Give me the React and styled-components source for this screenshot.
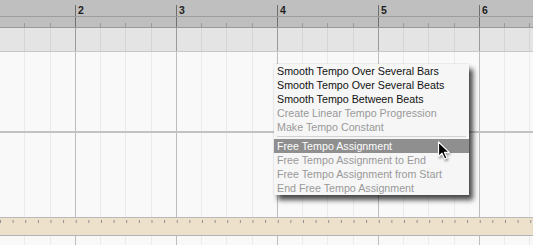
import React from "react";
import styled, { createGlobalStyle } from "styled-components";

const GlobalStyle = createGlobalStyle`
  html, body {
    margin: 0;
    padding: 0;
    background: #fafafa;
  }
`;

const BAR = 101;

const gridLines = (bar, beat) => `
  background-image:
    linear-gradient(to right, ${bar} 1px, transparent 1px),
    linear-gradient(to right, ${beat} 1px, transparent 1px),
    linear-gradient(to right, ${beat} 1px, transparent 1px),
    linear-gradient(to right, ${beat} 1px, transparent 1px);
  background-size: ${BAR}px 100%;
  background-position: 75px 0, 100px 0, 24px 0, 50px 0;
`;

const Arrangement = styled.div`
  position: relative;
  width: 533px;
  height: 245px;
  overflow: hidden;
  display: flex;
  flex-direction: column;
  background: #fafafa;
  font-family: "Liberation Sans", Arial, sans-serif;
`;

const Ruler = styled.div`
  flex: 0 0 16px;
  display: flex;
  align-items: flex-end;
  padding-left: 75px;
  background: #bfbfbf;
  border-bottom: 1px solid #9d9d9d;
`;

const BarLabel = styled.div`
  flex: ${(p) => (p.$last ? "1 1 auto" : `0 0 ${BAR}px`)};
  height: 11px;
  box-sizing: border-box;
  border-left: 1px solid #6e6e6e;
  padding-left: 2px;
  font-size: 10.5px;
  font-weight: bold;
  line-height: 10px;
  color: #1e1e1e;
`;

const TickRow = styled.div`
  flex: 0 0 10px;
  background-color: #bfbfbf;
  border-bottom: 1px solid #999;
  background-image:
    linear-gradient(to right, #707070 1px, transparent 1px),
    linear-gradient(to right, #9a9a9a 1px, transparent 1px),
    linear-gradient(to right, #9a9a9a 1px, transparent 1px),
    linear-gradient(to right, #9a9a9a 1px, transparent 1px);
  background-size: ${BAR}px 100%, ${BAR}px 4px, ${BAR}px 4px, ${BAR}px 4px;
  background-repeat: repeat-x;
  background-position: 75px 0, 100px 100%, 24px 100%, 50px 100%;
`;

const Lane = styled.div`
  flex: 0 0 ${(p) => p.$h}px;
  background-color: ${(p) => p.$bg};
  border-bottom: ${(p) => p.$border || "none"};
  ${(p) => gridLines(p.$bar, p.$beat)}
`;

const TempoStrip = styled.div`
  flex: 0 0 17px;
  background-color: #ede1cc;
  border-top: 1px solid #b9b9b9;
  border-bottom: 1px solid #b3b3b3;
  background-image: linear-gradient(to right, #8f8f8f 1px, transparent 1px);
  background-size: ${BAR / 8}px 3px;
  background-repeat: repeat-x;
  background-position: 0 2px;
`;

const Menu = styled.ul`
  position: absolute;
  left: 274px;
  top: 64px;
  width: 195px;
  margin: 0;
  padding: 0;
  list-style: none;
  background: rgba(246, 246, 246, 0.98);
  box-shadow: 4px 5px 5px rgba(0, 0, 0, 0.7), 0 0 1px rgba(0, 0, 0, 0.25);
`;

const MenuItem = styled.li`
  height: 14px;
  line-height: 14px;
  padding-left: 3px;
  font-size: 10.7px;
  white-space: nowrap;
  color: ${(p) => (p.$active ? "#fdfdfd" : p.$disabled ? "#999" : "#111")};
  background: ${(p) => (p.$active ? "#8f8f8f" : "transparent")};
`;

const Separator = styled.li`
  height: 5px;
  margin: 0 3px;
  display: flex;
  align-items: center;

  &::after {
    content: "";
    flex: 1;
    height: 1px;
    background: #d2d2d2;
  }
`;

const Cursor = styled.svg`
  position: absolute;
  left: 437px;
  top: 141px;
  filter: drop-shadow(1px 2px 1px rgba(0, 0, 0, 0.35));
`;

const bars = [2, 3, 4, 5, 6];

const items = [
  { label: "Smooth Tempo Over Several Bars" },
  { label: "Smooth Tempo Over Several Beats" },
  { label: "Smooth Tempo Between Beats" },
  { label: "Create Linear Tempo Progression", disabled: true },
  { label: "Make Tempo Constant", disabled: true },
  { separator: true },
  { label: "Free Tempo Assignment", active: true },
  { label: "Free Tempo Assignment to End", disabled: true },
  { label: "Free Tempo Assignment from Start", disabled: true },
  { label: "End Free Tempo Assignment", disabled: true },
];

const App = () => {
  return (
    <>
      <GlobalStyle />
      <Arrangement>
        <Ruler>
          {bars.map((n, i) => (
            <BarLabel key={n} $last={i === bars.length - 1}>
              {n}
            </BarLabel>
          ))}
        </Ruler>
        <TickRow />
        <Lane $h={23} $bg="#e4e4e4" $bar="#9a9a9a" $beat="#d5d5d5" $border="1px solid #c8c8c8" />
        <Lane $h={79} $bg="#f9f9f9" $bar="#bdbdbd" $beat="#ebebeb" $border="2px solid #c3c3c3" />
        <Lane $h={84} $bg="#f9f9f9" $bar="#bdbdbd" $beat="#ebebeb" />
        <TempoStrip />
        <Lane $h={10} $bg="#f9f9f9" $bar="#bdbdbd" $beat="#ebebeb" />

        <Menu>
          {items.map((item, i) =>
            item.separator ? (
              <Separator key={i} />
            ) : (
              <MenuItem key={i} $disabled={item.disabled} $active={item.active}>
                {item.label}
              </MenuItem>
            )
          )}
        </Menu>

        <Cursor width="14" height="20" viewBox="0 0 14 20">
          <path
            d="M1.5 1 L1.5 15.5 L5 12.2 L7.6 18 L10 17 L7.5 11.4 L12.3 11.4 Z"
            fill="#000"
            stroke="#fff"
            strokeWidth="1.2"
            strokeLinejoin="round"
          />
        </Cursor>
      </Arrangement>
    </>
  );
};

export default App;
